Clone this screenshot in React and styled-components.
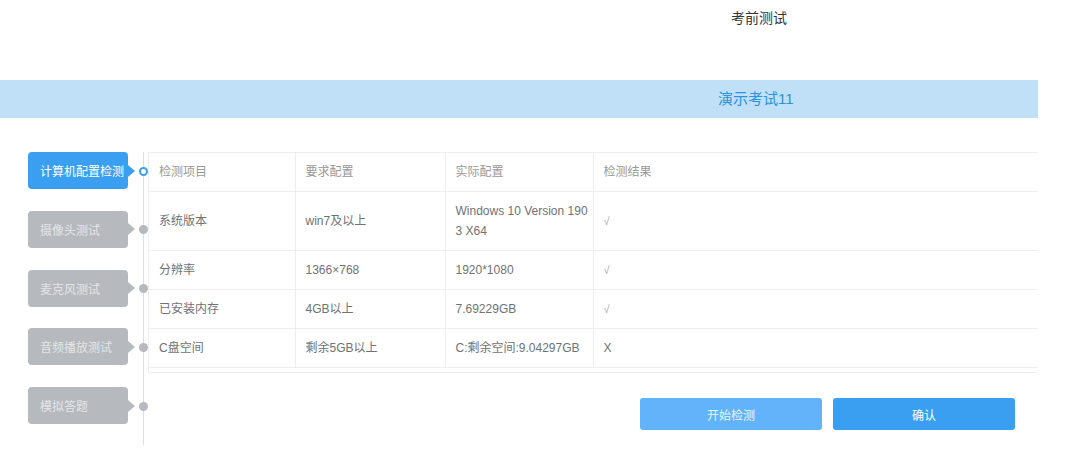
import React from 'react'
import styled, {createGlobalStyle} from 'styled-components'

const GlobalStyle = createGlobalStyle`
  html, body {
    margin: 0;
    padding: 0;
    background: #fff;
  }
  body {
    font-family: "Liberation Sans", "Noto Sans CJK SC", sans-serif;
    color: #606266;
  }
  * { box-sizing: border-box; }
`;

const Page = styled.div`
  width: 1072px;
  overflow: hidden;
`;

const TopBar = styled.header`
  height: 80px;
  padding: 9px 0 0 731px;
  font-size: 14px;
  line-height: 18px;
  color: #333;
`;

const Banner = styled.div`
  width: 1038px;
  height: 38px;
  background: #bfe0f7;
  color: #2a93dc;
  font-size: 15px;
  line-height: 38px;
  padding-left: 718px;
`;

const Main = styled.section`
  display: flex;
  align-items: flex-start;
  margin-top: 34px;
`;

const Sidebar = styled.nav`
  width: 144px;
  flex: none;
  display: flex;
  flex-direction: column;
  gap: 21.75px;
  padding: 0 0 21px 28px;
  border-right: 1px solid #dcdfe6;
`;

const Step = styled.div`
  position: relative;
  width: 100px;
  height: 37px;
  border-radius: 4px;
  background: ${p => (p.$active ? '#3a9ff0' : '#b6b9bd')};
  color: ${p => (p.$active ? '#fff' : '#e4e6e8')};
  font-size: 12px;
  font-weight: normal;
  display: flex;
  align-items: center;
  padding-left: 12px;
  white-space: nowrap;

  &::after {
    content: '';
    position: absolute;
    right: -7px;
    top: 50%;
    transform: translateY(-50%);
    border-left: 7px solid ${p => (p.$active ? '#3a9ff0' : '#b6b9bd')};
    border-top: 6px solid transparent;
    border-bottom: 6px solid transparent;
  }
`;

const Dot = styled.span`
  position: absolute;
  right: -20px;
  top: 50%;
  width: 9px;
  height: 9px;
  margin-top: -4px;
  border-radius: 50%;
  background: ${p => (p.$active ? '#fff' : '#b6b9bd')};
  border: ${p => (p.$active ? '2px solid #3a9ff0' : 'none')};
`;

const Content = styled.div`
  margin-left: 4px;
  width: 890px;
`;

const TableWrap = styled.div`
  border-left: 1px solid #ebeef5;
  border-bottom: 1px solid #ebeef5;
  padding-bottom: 4px;
`;

const Table = styled.table`
  width: 100%;
  border-collapse: collapse;
  table-layout: fixed;
  border-top: 1px solid #ebeef5;
`;

const Th = styled.th`
  text-align: left;
  font-weight: normal;
  font-size: 12px;
  color: #999;
  line-height: 20px;
  padding: 9px 10px;
  border-bottom: 1px solid #ebeef5;
  border-right: ${p => (p.$last ? 'none' : '1px solid #ebeef5')};
  width: ${p => p.$w || 'auto'};
`;

const Td = styled.td`
  font-size: 12px;
  color: #6f7276;
  line-height: 20px;
  padding: 9px 1px 9px 10px;
  word-break: break-all;
  border-bottom: 1px solid #ebeef5;
  border-right: ${p => (p.$last ? 'none' : '1px solid #ebeef5')};
`;

const Mark = styled.span`
  color: ${p => (p.$ok ? '#a0a4ab' : '#6f7276')};
  font-size: ${p => (p.$ok ? '11px' : '12px')};
`;

const Actions = styled.div`
  display: flex;
  justify-content: flex-end;
  gap: 11px;
  margin-top: 25px;
  padding-right: 23px;
`;

const Button = styled.button`
  width: 182px;
  height: 32px;
  border: none;
  border-radius: 3px;
  background: ${p => (p.$light ? '#62b3f9' : '#3a9ff0')};
  color: ${p => (p.$light ? '#e8f3fd' : '#fff')};
  font-family: inherit;
  font-size: 12px;
  cursor: pointer;
`;

const steps = ['计算机配置检测', '摄像头测试', '麦克风测试', '音频播放测试', '模拟答题'];

const rows = [
  {item: '系统版本', req: 'win7及以上', real: 'Windows 10 Version 1903 X64', ok: true},
  {item: '分辨率', req: '1366×768', real: '1920*1080', ok: true},
  {item: '已安装内存', req: '4GB以上', real: '7.69229GB', ok: true},
  {item: 'C盘空间', req: '剩余5GB以上', real: 'C:剩余空间:9.04297GB', ok: false},
];

export default function App() {
  return (
    <Page>
      <GlobalStyle/>
      <TopBar>考前测试</TopBar>
      <Banner>演示考试11</Banner>
      <Main>
        <Sidebar>
          {steps.map((s, i) => (
            <Step key={s} $active={i === 0}>
              {s}
              <Dot $active={i === 0}/>
            </Step>
          ))}
        </Sidebar>
        <Content>
          <TableWrap>
            <Table>
              <thead>
                <tr>
                  <Th $w="146px">检测项目</Th>
                  <Th $w="150px">要求配置</Th>
                  <Th $w="148px">实际配置</Th>
                  <Th $last>检测结果</Th>
                </tr>
              </thead>
              <tbody>
                {rows.map(r => (
                  <tr key={r.item}>
                    <Td>{r.item}</Td>
                    <Td>{r.req}</Td>
                    <Td>{r.real}</Td>
                    <Td $last>
                      <Mark $ok={r.ok}>{r.ok ? '√' : 'X'}</Mark>
                    </Td>
                  </tr>
                ))}
              </tbody>
            </Table>
          </TableWrap>
          <Actions>
            <Button $light>开始检测</Button>
            <Button>确认</Button>
          </Actions>
        </Content>
      </Main>
    </Page>
  )
}
